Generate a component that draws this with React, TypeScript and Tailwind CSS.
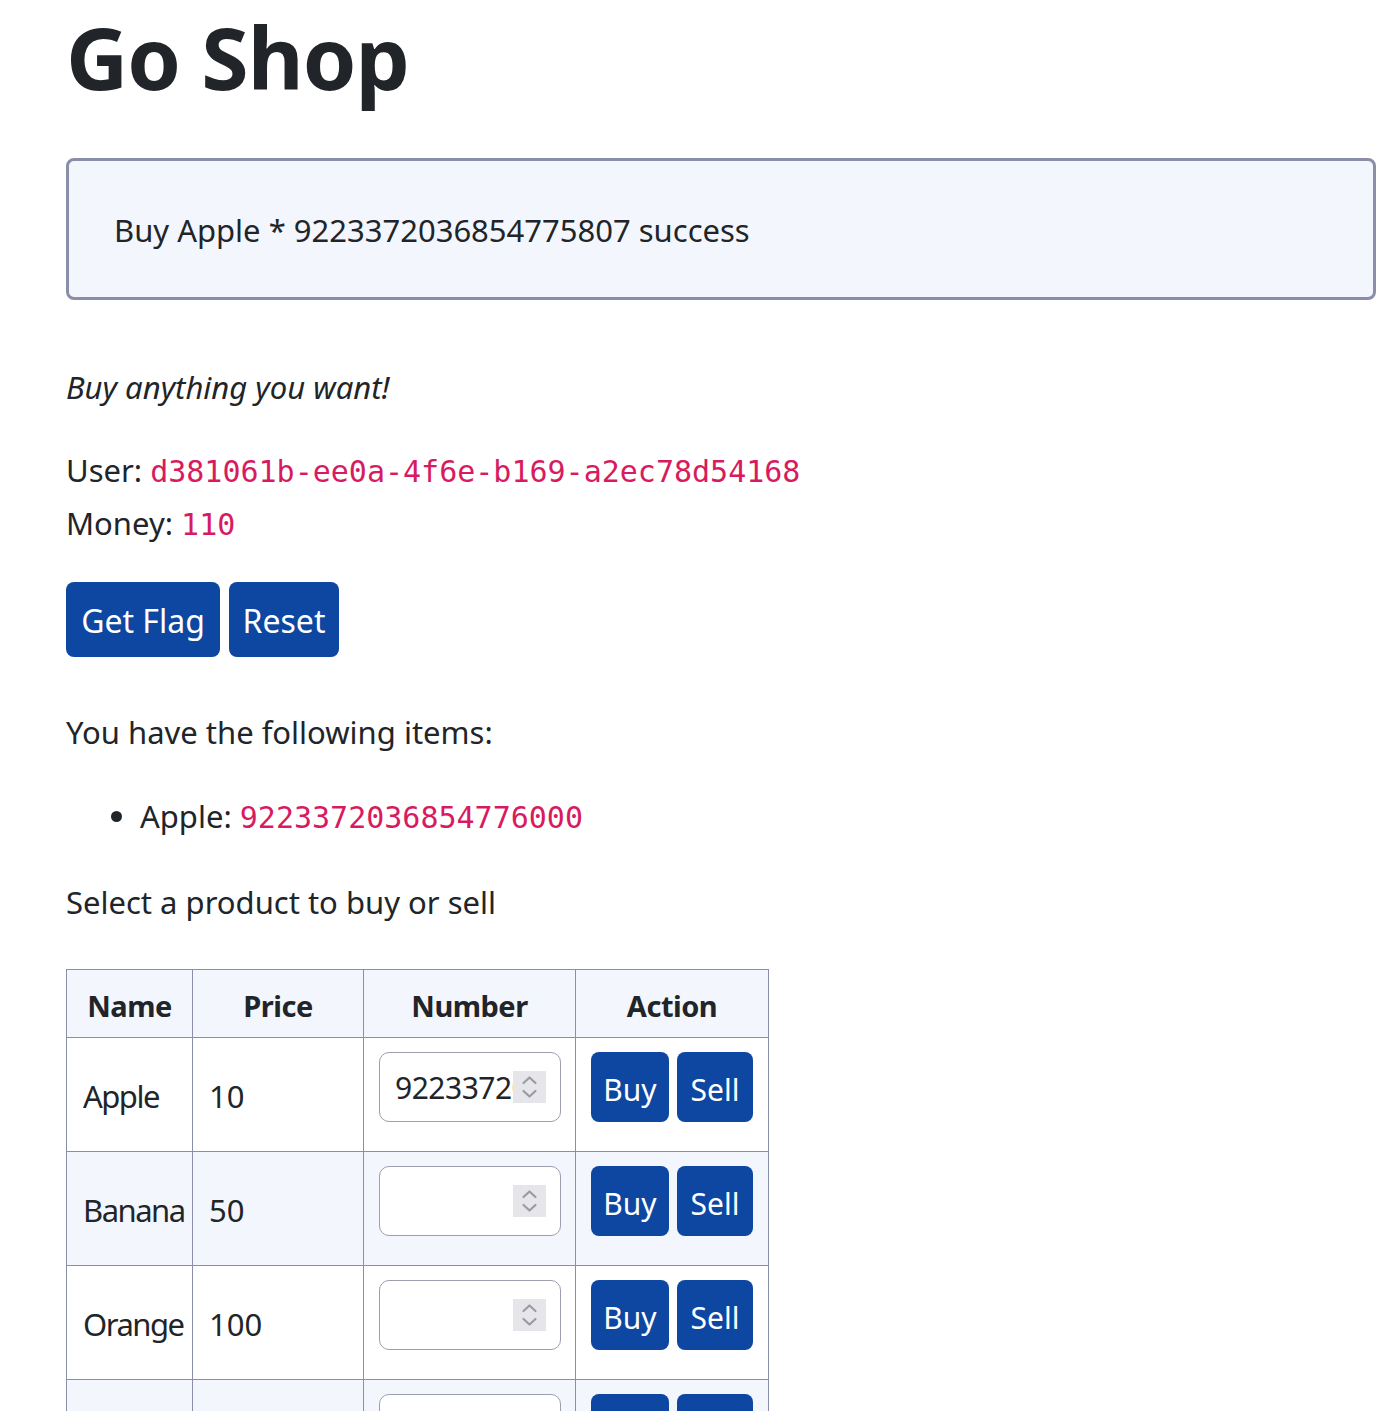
const products = [
  { name: "Apple", price: 10, value: "9223372036854775807" },
  { name: "Banana", price: 50, value: "" },
  { name: "Orange", price: 100, value: "" },
  { name: "Flag", price: 1200, value: "" },
];

const mono = "font-['DejaVu_Sans_Mono',monospace] text-[30px] leading-none text-[#d81b60]";

function Spinner() {
  return (
    <svg width="33" height="32" viewBox="0 0 33 32" className="block">
      <rect width="33" height="32" fill="#e6e6ea" />
      <path d="M10.5 12 L16.5 6.5 L22.5 12" fill="none" stroke="#9a9aa4" strokeWidth="2.2" strokeLinecap="round" strokeLinejoin="round" />
      <path d="M10.5 20 L16.5 25.5 L22.5 20" fill="none" stroke="#9a9aa4" strokeWidth="2.2" strokeLinecap="round" strokeLinejoin="round" />
    </svg>
  );
}

function NumberBox({ value }: { value: string }) {
  return (
    <div className="w-[182px] h-[70px] rounded-[10px] border border-[#9c9eb2] bg-white flex items-center pl-[15px]">
      <div className="w-[118px] overflow-hidden whitespace-nowrap text-[30px] leading-[68px] tracking-[-0.5px] pt-[2px]">{value}</div>
      <Spinner />
    </div>
  );
}

function Btn({ children, className = "" }: { children: React.ReactNode; className?: string }) {
  return (
    <button className={"bg-[#0d47a1] text-white rounded-[8px] flex items-center justify-center " + className}>
      {children}
    </button>
  );
}

export default function App() {
  return (
    <div className="min-h-screen bg-white text-[#212529] font-['Noto_Sans',sans-serif] text-[31px] leading-[53px] pl-[66px] pr-[13px] overflow-hidden">
      <h1 className="text-[86px] font-bold leading-[106px] pt-[4px] tracking-[-1px]">Go Shop</h1>

      <div className="mt-[48px] h-[142px] border-[3px] border-[#8a8ea8] rounded-[8px] bg-[#f3f6fd] flex items-center pl-[45px] pt-[2px]">
        Buy Apple * 9223372036854775807 success
      </div>

      <p className="mt-[61px] italic">Buy anything you want!</p>

      <div className="mt-[30px]">
        <div>
          User: <code className={mono}>d381061b-ee0a-4f6e-b169-a2ec78d54168</code>
        </div>
        <div>
          Money: <code className={mono}>110</code>
        </div>
      </div>

      <div className="mt-[32px] flex gap-[9px]">
        <Btn className="w-[154px] h-[75px] text-[32px] pt-[2px]">Get Flag</Btn>
        <Btn className="w-[110px] h-[75px] text-[32px] pt-[2px]">Reset</Btn>
      </div>

      <p className="mt-[49px]">You have the following items:</p>

      <ul className="mt-[31px] pl-[74px] list-disc">
        <li>
          Apple: <code className={mono}>9223372036854776000</code>
        </li>
      </ul>

      <p className="mt-[33px]">Select a product to buy or sell</p>

      <table className="mt-[40px] border-collapse table-fixed w-[702px]">
        <colgroup>
          <col className="w-[126px]" />
          <col className="w-[171px]" />
          <col className="w-[212px]" />
          <col className="w-[193px]" />
        </colgroup>
        <thead>
          <tr className="bg-[#f3f6fd] h-[68px] text-[29px] tracking-[-0.5px]">
            <th className="border border-[#8a8ea8] font-bold text-center pt-[4px]">Name</th>
            <th className="border border-[#8a8ea8] font-bold text-center pt-[4px]">Price</th>
            <th className="border border-[#8a8ea8] font-bold text-center pt-[4px]">Number</th>
            <th className="border border-[#8a8ea8] font-bold text-center pt-[4px]">Action</th>
          </tr>
        </thead>
        <tbody>
          {products.map((p, i) => (
            <tr key={p.name} className={(i % 2 === 1 ? "bg-[#f3f6fd]" : "bg-white") + " h-[114px]"}>
              <td className="border border-[#8a8ea8] pl-[16px] pr-0 pt-[4px] align-middle whitespace-nowrap tracking-[-1.5px]">{p.name}</td>
              <td className="border border-[#8a8ea8] px-[16px] pt-[4px] align-middle">{p.price}</td>
              <td className="border border-[#8a8ea8] pl-[15px] pt-[14px] pb-[29px] align-top">
                <NumberBox value={p.value} />
              </td>
              <td className="border border-[#8a8ea8] pl-[15px] pt-[14px] pb-[29px] align-top">
                <div className="flex gap-[8px] text-[30px]">
                  <Btn className="w-[78px] h-[70px] pt-[4px]">Buy</Btn>
                  <Btn className="w-[76px] h-[70px] pt-[4px]">Sell</Btn>
                </div>
              </td>
            </tr>
          ))}
        </tbody>
      </table>
    </div>
  );
}
